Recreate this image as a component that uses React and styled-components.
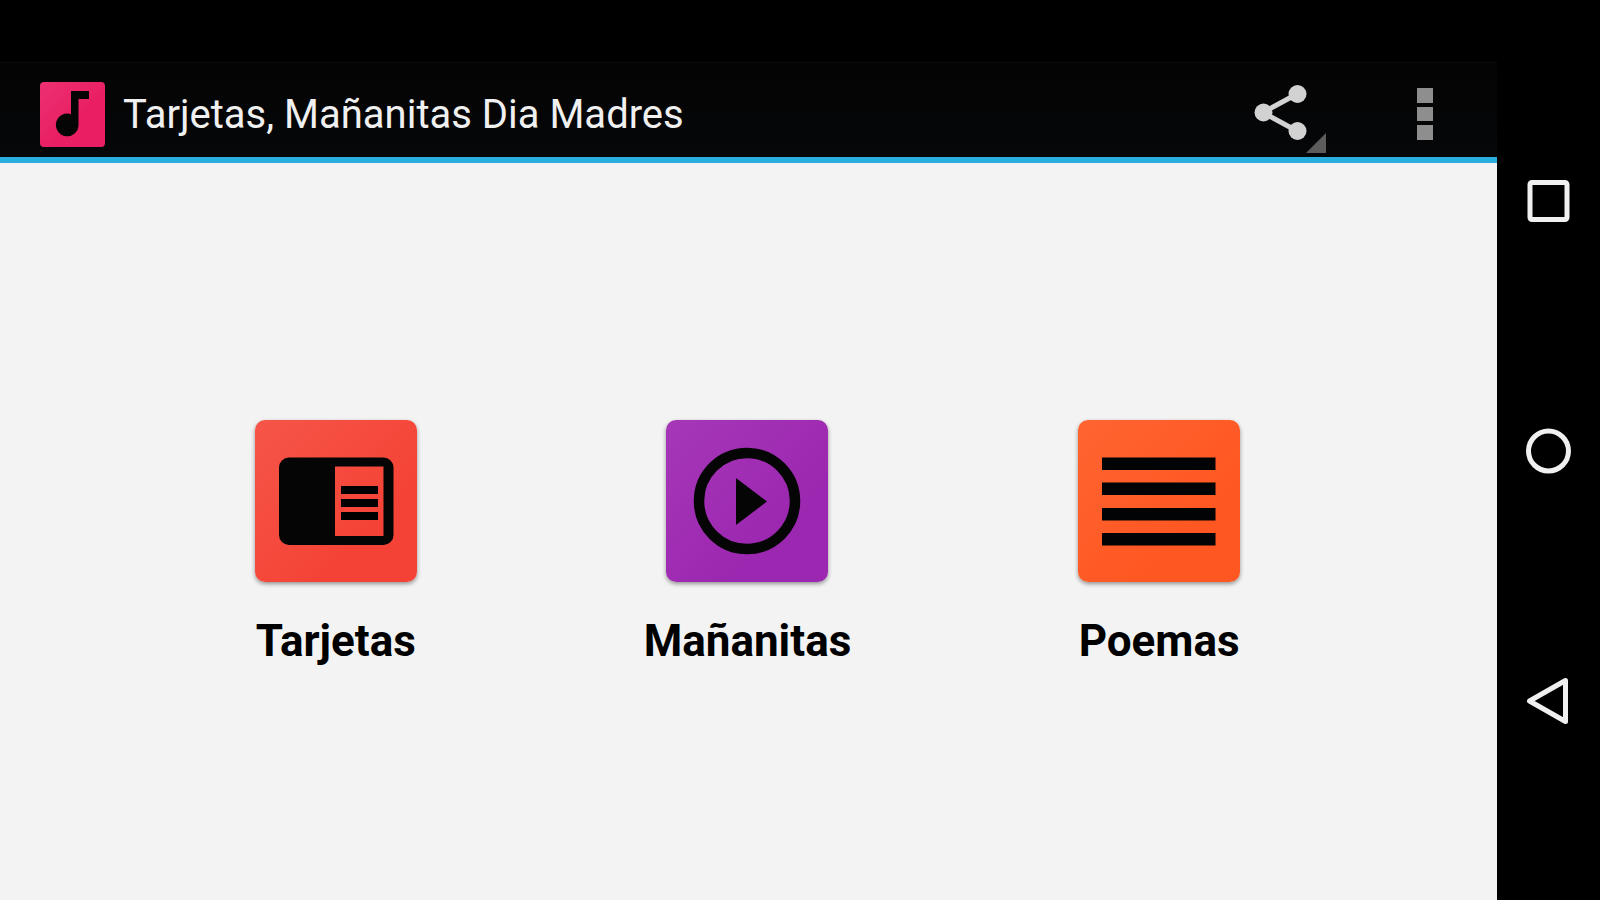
import React from "react";
import styled, { createGlobalStyle } from "styled-components";

const GlobalStyle = createGlobalStyle`
  * {
    box-sizing: border-box;
  }

  body {
    margin: 0;
    background: #000;
    font-family: Roboto, "Noto Sans", sans-serif;
  }
`;

const Device = styled.div`
  display: flex;
  min-height: 100vh;
  background: #000;
`;

const Screen = styled.div`
  flex: 1;
  display: flex;
  flex-direction: column;
`;

const StatusBar = styled.div`
  height: 62px;
`;

const ActionBar = styled.header`
  display: flex;
  align-items: center;
  height: 101px;
  padding: 8px 32px 0 40px;
  background: linear-gradient(#040404, #060709);
  border-top: 1px solid #0b0b0b;
  border-bottom: 6px solid #2aaee0;
`;

const Title = styled.h1`
  flex: 1;
  margin: 0;
  padding: 2px 0 0 18px;
  color: #f0f0f0;
  font-size: 40px;
  font-weight: 400;
  line-height: 48px;
`;

const IconButton = styled.button`
  display: flex;
  align-items: center;
  justify-content: center;
  width: ${(props) => props.$width}px;
  height: ${(props) => props.$height}px;
  padding: 0;
  border: none;
  background: none;
  cursor: pointer;
`;

const Content = styled.main`
  flex: 1;
  display: grid;
  grid-template-columns: repeat(3, 1fr);
  align-items: center;
  padding: 24px 132px 0 130px;
  background: #f3f3f3;
`;

const MenuItem = styled.button`
  display: flex;
  flex-direction: column;
  align-items: center;
  gap: 32px;
  padding: 0;
  border: none;
  background: none;
  color: #000;
  font-family: inherit;
  font-size: 44px;
  font-weight: 700;
  line-height: 54px;
  cursor: pointer;
`;

const Tile = styled.span`
  display: block;
  width: 162px;
  height: 162px;
  border-radius: 10px;
  background: linear-gradient(135deg, ${(props) => props.$from}, ${(props) => props.$to} 70%);
  box-shadow: 0 2px 4px rgba(0, 0, 0, 0.4);

  svg {
    display: block;
  }
`;

const NavBar = styled.nav`
  display: flex;
  flex-direction: column;
  align-items: center;
  justify-content: center;
  width: 103px;
`;

const AppIcon = () => (
  <svg width="65" height="65" viewBox="0 0 65 65" aria-hidden="true">
    <defs>
      <linearGradient id="pink" x1="0" y1="0" x2="1" y2="1">
        <stop offset="0" stopColor="#ec3071" />
        <stop offset="0.6" stopColor="#e91e63" />
      </linearGradient>
    </defs>
    <rect width="65" height="65" rx="4" fill="url(#pink)" />
    <path d="M31 9h18v8H38.5v26a11.3 11.3 0 1 1-7.5-10.7z" fill="#050505" />
  </svg>
);

const ShareIcon = () => (
  <svg width="76" height="64" viewBox="0 0 76 64" aria-hidden="true">
    <path d="M47 12 13 30.5 47 49" fill="none" stroke="#d2d2d2" strokeWidth="5" />
    <circle cx="47.5" cy="12" r="9" fill="#d2d2d2" />
    <circle cx="13.5" cy="30.5" r="9" fill="#d2d2d2" />
    <circle cx="47.5" cy="49" r="9" fill="#d2d2d2" />
  </svg>
);

const Share = styled(IconButton)`
  position: relative;
  margin-right: 59px;

  /* little corner that marks a submenu */
  &::after {
    content: "";
    position: absolute;
    right: 0;
    bottom: 4px;
    width: 20px;
    height: 20px;
    background: #5c5c5c;
    clip-path: polygon(100% 0, 100% 100%, 0 100%);
  }
`;

const OverflowIcon = () => (
  <svg width="16" height="52" viewBox="0 0 16 52" fill="#8e8e8e" aria-hidden="true">
    <rect width="16" height="15" />
    <rect y="19" width="16" height="14" />
    <rect y="37" width="16" height="15" />
  </svg>
);

const CardIcon = () => (
  <svg width="162" height="162" viewBox="0 0 162 162" aria-hidden="true">
    <path
      fillRule="evenodd"
      d="M34 37.5h94.5a10 10 0 0 1 10 10v67.5a10 10 0 0 1-10 10H34a10 10 0 0 1-10-10V47.5a10 10 0 0 1 10-10zM80 46.5v69.5h48.5V46.5z"
      fill="#050505"
    />
    <path d="M86 66h37v8H86zM86 79h37v8H86zM86 92h37v8H86z" />
  </svg>
);

const PlayIcon = () => (
  <svg width="162" height="162" viewBox="0 0 162 162" aria-hidden="true">
    <circle cx="81" cy="81" r="48" fill="none" stroke="#050505" strokeWidth="10.5" />
    <path d="M70 58v47l31-23.5z" fill="#050505" />
  </svg>
);

const LinesIcon = () => (
  <svg width="162" height="162" viewBox="0 0 162 162" aria-hidden="true">
    <path d="M24 37.5h113.5v12.5H24zM24 62.5h113.5v12.5H24zM24 88h113.5v12.5H24zM24 113h113.5v12.5H24z" fill="#020304" />
  </svg>
);

const menu = [
  { name: "Tarjetas", from: "#f65549", to: "#f44336", icon: <CardIcon /> },
  { name: "Mañanitas", from: "#a637b8", to: "#9c27b0", icon: <PlayIcon /> },
  { name: "Poemas", from: "#ff6431", to: "#ff5722", icon: <LinesIcon /> },
];

const navShapes = [
  { name: "Recientes", shape: <rect x="5" y="7.5" width="37" height="37" rx="2" /> },
  { name: "Inicio", shape: <circle cx="23.5" cy="26" r="20" /> },
  { name: "Atrás", shape: <path d="M4.5 26 40.5 5.5v41z" /> },
];

function App() {
  return (
    <>
      <GlobalStyle />
      <Device>
        <Screen>
          <StatusBar />
          <ActionBar>
            <AppIcon />
            <Title>Tarjetas, Mañanitas Dia Madres</Title>
            <Share $width={76} $height={86} aria-label="Compartir">
              <ShareIcon />
            </Share>
            <IconButton $width={80} $height={86} aria-label="Más opciones">
              <OverflowIcon />
            </IconButton>
          </ActionBar>
          <Content>
            {menu.map((item) => (
              <MenuItem key={item.name}>
                <Tile $from={item.from} $to={item.to}>{item.icon}</Tile>
                {item.name}
              </MenuItem>
            ))}
          </Content>
        </Screen>
        <NavBar>
          {navShapes.map((item) => (
            <IconButton key={item.name} $width={103} $height={250} aria-label={item.name}>
              <svg width="48" height="50" viewBox="0 0 48 50" fill="none" stroke="#f0f0f0" strokeWidth="5" strokeLinejoin="round">
                {item.shape}
              </svg>
            </IconButton>
          ))}
        </NavBar>
      </Device>
    </>
  );
}

export default App;
